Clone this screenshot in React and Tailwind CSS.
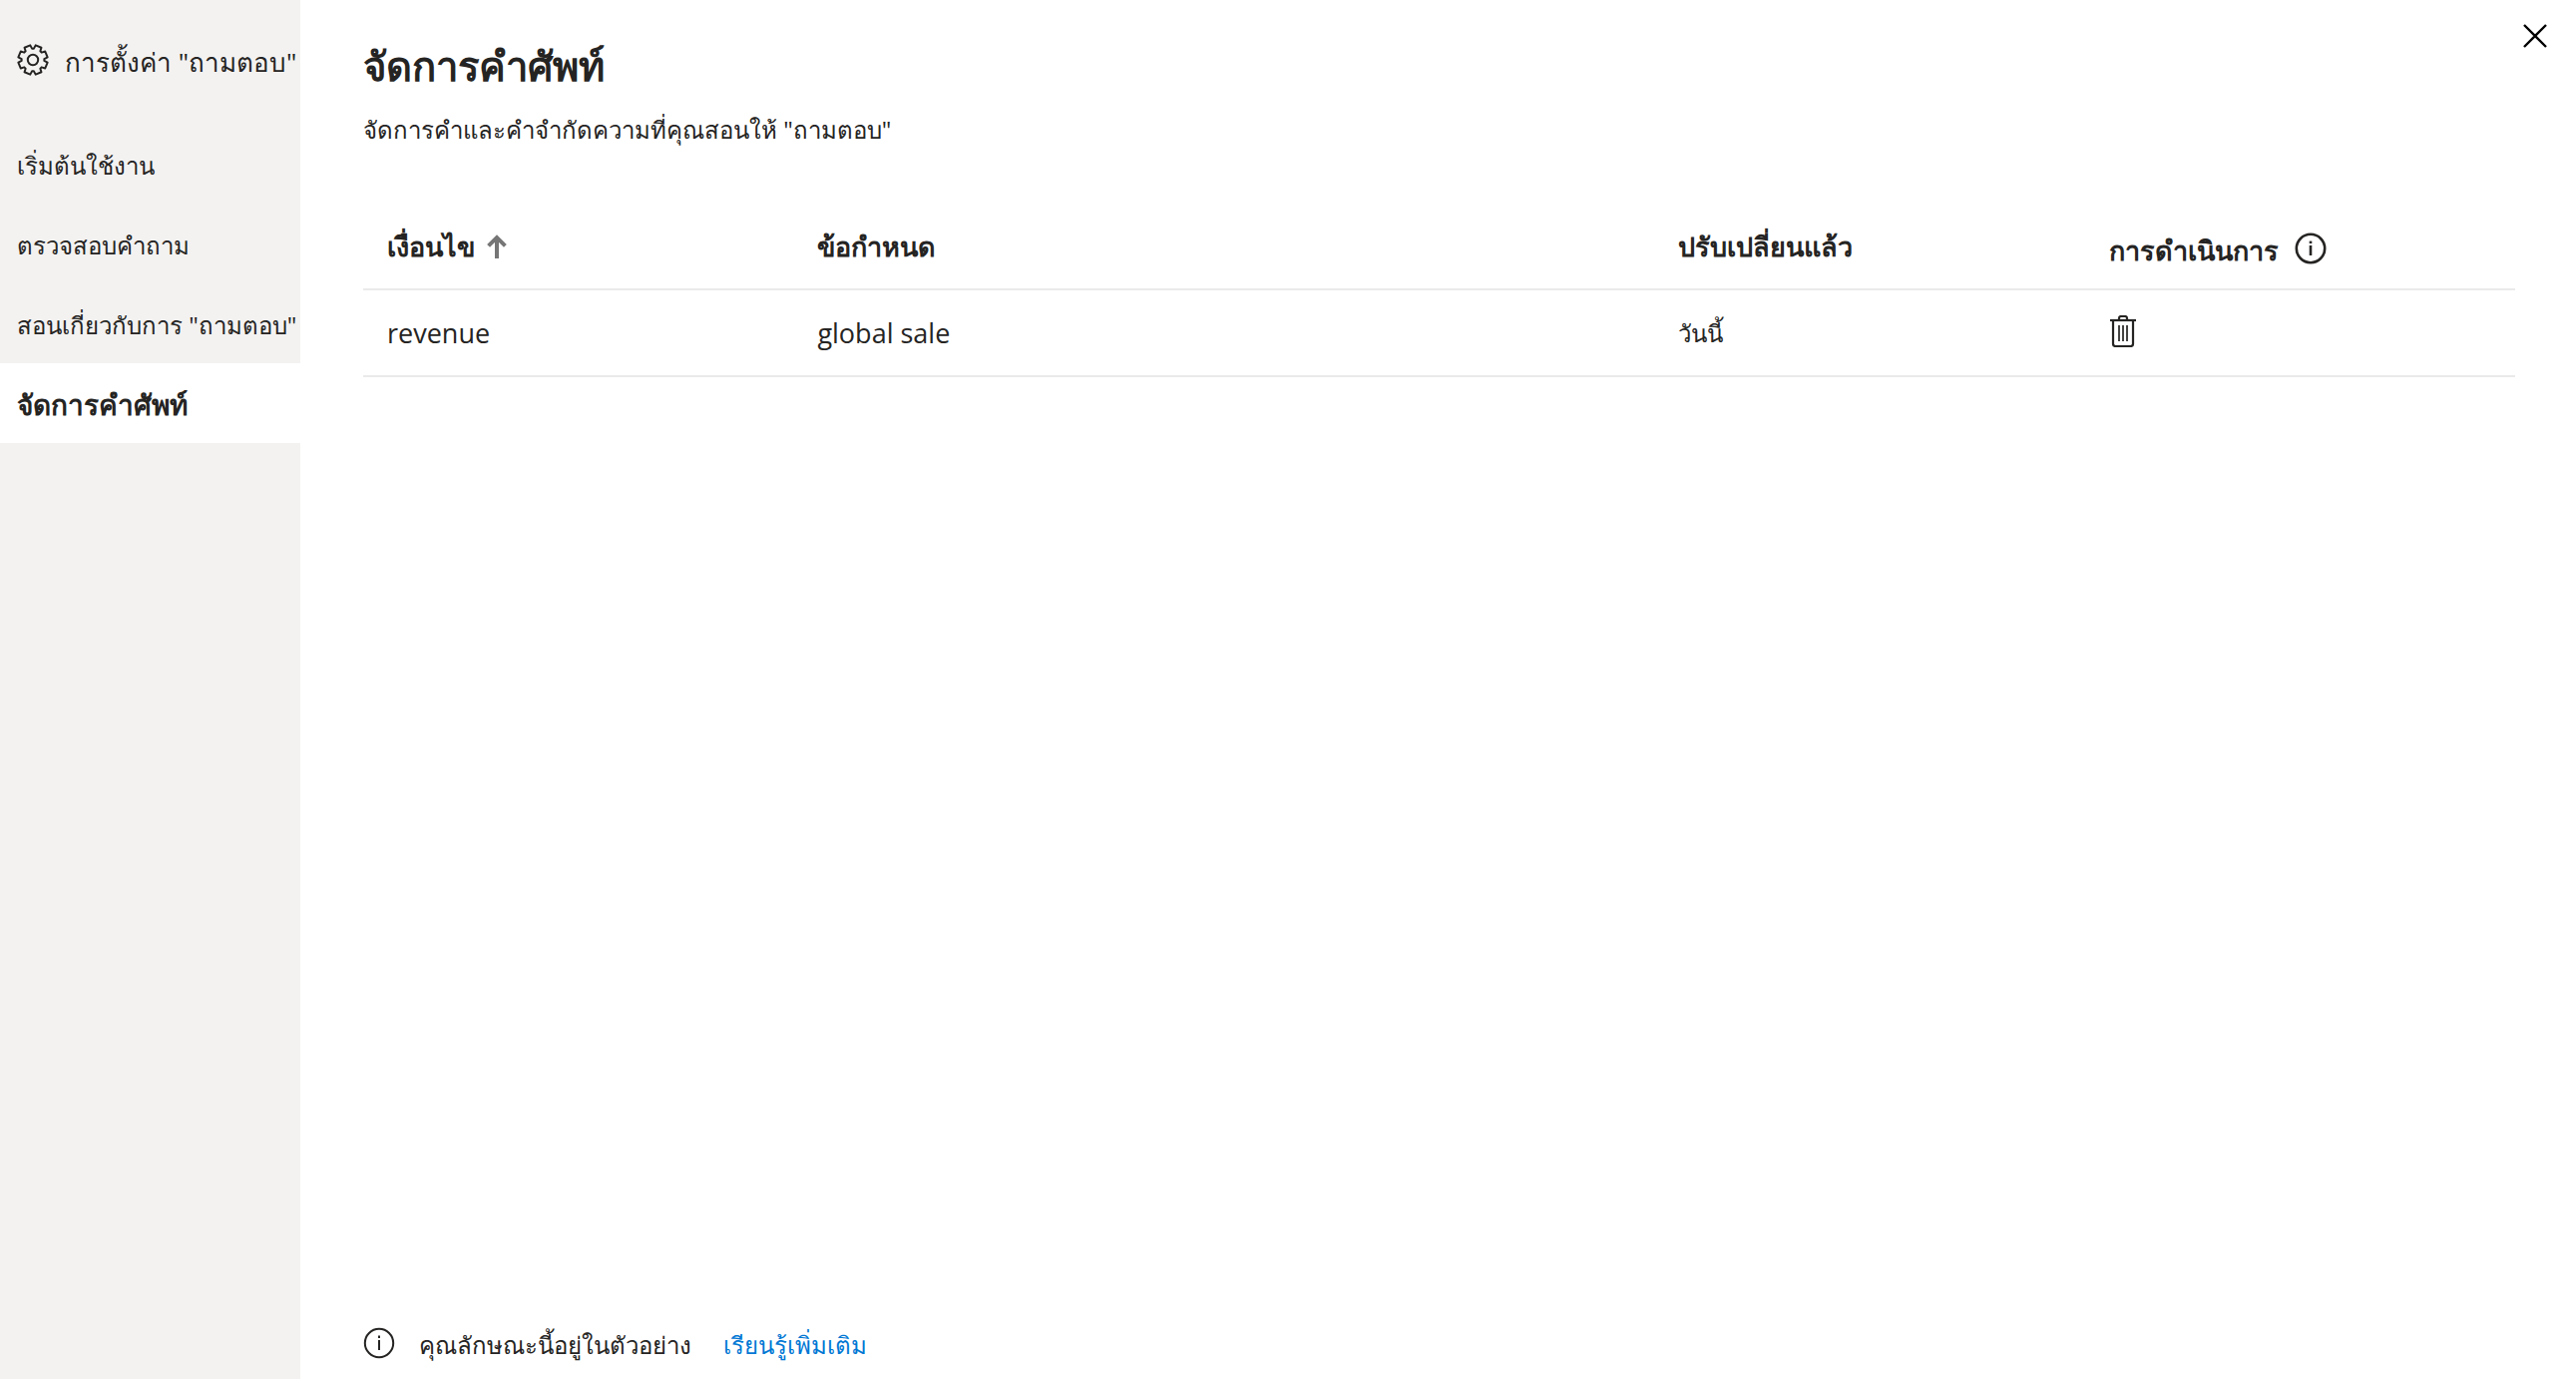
const NAV_ITEMS = [
  { label: 'เริ่มต้นใช้งาน' },
  { label: 'ตรวจสอบคำถาม' },
  { label: 'สอนเกี่ยวกับการ "ถามตอบ"' },
  { label: 'จัดการคำศัพท์', current: true },
];

const TERMS = [{ term: 'revenue', definition: 'global sale', modified: 'วันนี้' }];

function gearPath() {
  const pts = [];
  for (let i = 0; i < 8; i++) {
    const a = (i * 45 + 22.5) * (Math.PI / 180);
    [[-0.31, 11.4], [-0.21, 14.9], [0.21, 14.9], [0.31, 11.4]].forEach(([d, r]) => {
      pts.push(`${(16 + r * Math.sin(a + d)).toFixed(2)} ${(16 - r * Math.cos(a + d)).toFixed(2)}`);
    });
  }
  return `M${pts.join('L')}Z`;
}

function GearIcon() {
  return (
    <svg className="size-8 shrink-0" viewBox="0 0 32 32" fill="none" stroke="currentColor" strokeWidth="2" aria-hidden="true">
      <path d={gearPath()} strokeLinejoin="round" />
      <circle cx="16" cy="16" r="5.2" />
    </svg>
  );
}

function InfoIcon({ strokeWidth }) {
  return (
    <svg className="size-8 shrink-0" viewBox="0 0 32 32" fill="none" stroke="currentColor" strokeWidth={strokeWidth} aria-hidden="true">
      <circle cx="16" cy="16" r="14.2" />
      <path d="M16 13V23" />
      <path d="M16 8.600V11" />
    </svg>
  );
}

function SortIcon() {
  return (
    <svg className="h-6 w-5 shrink-0 text-[#767676]" viewBox="0 0 20 24" fill="none" stroke="currentColor" strokeWidth="4" aria-hidden="true">
      <path d="M10 24V3M1.6 11.4L10 3l8.400 8.400" />
    </svg>
  );
}

function TrashIcon() {
  return (
    <svg className="h-8 w-7" viewBox="0 0 28 32" fill="none" stroke="currentColor" strokeWidth="2.2" aria-hidden="true">
      <path d="M1 5H27" />
      <path d="M10 5V3Q10 1 12 1H16Q18 1 18 3V5" />
      <path d="M4 6V28.500Q4 31 6.500 31H21.500Q24 31 24 28.500V6" />
      <path d="M10 10V26M14 10V26M18 10V26" strokeWidth="1.7" />
    </svg>
  );
}

export default function App() {
  return (
    <div className="flex min-h-screen bg-white font-['Open_Sans','Noto_Sans',sans-serif] text-[#252423]">
      <aside className="w-[301px] shrink-0 bg-[#f3f2f1]">
        <header className="flex h-[124px] items-start gap-4 pt-11 pl-[17px]">
          <GearIcon />
          <h2 className="text-[26px] leading-9 whitespace-nowrap">การตั้งค่า "ถามตอบ"</h2>
        </header>
        <nav>
          {NAV_ITEMS.map((item) => (
            <button
              key={item.label}
              type="button"
              aria-current={item.current ? 'page' : undefined}
              className={
                item.current
                  ? 'flex h-20 w-full items-center bg-white pt-0.5 pl-[17px] text-[28px] font-bold whitespace-nowrap'
                  : 'flex h-20 w-full items-center pt-1 pl-[17px] text-2xl whitespace-nowrap'
              }
            >
              {item.label}
            </button>
          ))}
        </nav>
      </aside>

      <main className="relative flex min-w-0 flex-1 flex-col pr-[61px] pl-[63px]">
        <button type="button" aria-label="ปิด" className="absolute top-6 right-[29px] text-black">
          <svg className="size-6" viewBox="0 0 24 24" stroke="currentColor" strokeWidth="2.400" aria-hidden="true">
            <path d="M1 1L23 23M23 1L1 23" />
          </svg>
        </button>

        <h1 className="pt-10 text-[40px] leading-13 font-bold">จัดการคำศัพท์</h1>
        <p className="mt-5 text-2xl leading-9">จัดการคำและคำจำกัดความที่คุณสอนให้ "ถามตอบ"</p>

        <table className="mt-14 w-full table-fixed border-collapse text-left">
          <colgroup>
            <col className="w-1/5" />
            <col className="w-2/5" />
            <col className="w-1/5" />
            <col className="w-1/5" />
          </colgroup>
          <thead>
            <tr className="h-[86px] border-b-2 border-[#eaeaea] text-[27px] leading-9">
              <th scope="col" className="px-6 font-bold" aria-sort="ascending">
                <button type="button" className="flex items-center gap-3">
                  เงื่อนไข
                  <SortIcon />
                </button>
              </th>
              <th scope="col" className="px-6 font-bold">ข้อกำหนด</th>
              <th scope="col" className="px-6 font-bold">ปรับเปลี่ยนแล้ว</th>
              <th scope="col" className="px-6 pt-1 font-bold">
                <span className="flex items-center gap-4">
                  <span className="pt-1">การดำเนินการ</span>
                  <InfoIcon strokeWidth="2.6" />
                </span>
              </th>
            </tr>
          </thead>
          <tbody>
            {TERMS.map((row) => (
              <tr key={row.term} className="h-[87px] border-b-2 border-[#eaeaea] text-[27px] leading-9">
                <td className="px-6">{row.term}</td>
                <td className="px-6">{row.definition}</td>
                <td className="px-6 text-2xl">{row.modified}</td>
                <td className="px-6 pb-1">
                  <button type="button" aria-label="ลบ" className="flex">
                    <TrashIcon />
                  </button>
                </td>
              </tr>
            ))}
          </tbody>
        </table>

        <footer className="mt-auto flex items-start pb-4 text-2xl leading-9">
          <InfoIcon strokeWidth="2" />
          <p className="ml-6">คุณลักษณะนี้อยู่ในตัวอย่าง</p>
          <a href="#learn-more" className="ml-8 text-[#0078d4]">เรียนรู้เพิ่มเติม</a>
        </footer>
      </main>
    </div>
  );
}
